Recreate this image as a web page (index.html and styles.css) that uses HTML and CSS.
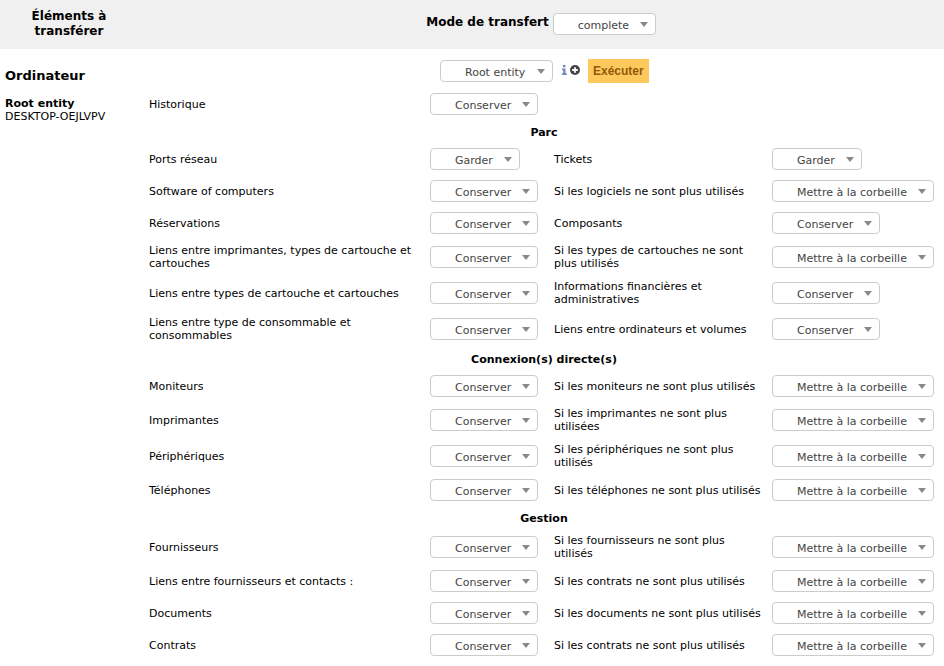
FILE: index.html
```html
<!DOCTYPE html>
<html lang="fr">
<head>
<meta charset="utf-8">
<title>Transfert</title>
<link rel="stylesheet" href="styles.css">
</head>
<body>
<form class="transfer">
  <header class="top">
    <h1 class="top-title">Éléments à transférer</h1>
    <div class="mode">
      <label for="mode">Mode de transfert</label>
      <span class="pick mode-pick"><select id="mode"><option>complete</option></select></span>
    </div>
  </header>
  <main class="body">
    <aside class="items">
      <h2 class="items-type">Ordinateur</h2>
      <p class="items-entity">Root entity</p>
      <p class="items-name">DESKTOP-OEJLVPV</p>
    </aside>
    <div class="options">
      <div class="target">
        <span class="pick entity-pick"><select aria-label="Root entity"><option>Root entity</option></select></span>
        <button type="button" class="icon-btn info" aria-label="Informations"><svg width="6" height="12" viewBox="0 0 6 12"><path d="M1 1h2.5v2.3h-2.5zM0 4.5h3.5v4.7h1.2v1.8h-4.7v-1.8h1.2v-2.9h-1.2z" fill="#7486bd"/></svg></button>
        <button type="button" class="icon-btn" aria-label="Ajouter"><svg width="10" height="10" viewBox="0 0 10 10"><circle cx="5" cy="5" r="5" fill="#444"/><path d="M4.1 2.2h1.8v1.9h1.9v1.8h-1.9v1.9h-1.8v-1.9h-1.9v-1.8h1.9z" fill="#fff"/></svg></button>
        <button type="button" class="run">Exécuter</button>
      </div>
      <div class="row"><label for="a0">Historique</label><span class="pick keep"><select id="a0"><option>Conserver</option></select></span></div>

      <h3 class="section">Parc</h3>
      <div class="row"><label for="a1">Ports réseau</label><span class="pick hold"><select id="a1"><option>Garder</option></select></span><label for="b1">Tickets</label><span class="pick hold"><select id="b1"><option>Garder</option></select></span></div>
      <div class="row"><label for="a2">Software of computers</label><span class="pick keep"><select id="a2"><option>Conserver</option></select></span><label for="b2">Si les logiciels ne sont plus utilisés</label><span class="pick trash"><select id="b2"><option>Mettre à la corbeille</option></select></span></div>
      <div class="row"><label for="a3">Réservations</label><span class="pick keep"><select id="a3"><option>Conserver</option></select></span><label for="b3">Composants</label><span class="pick keep"><select id="b3"><option>Conserver</option></select></span></div>
      <div class="row"><label for="a4">Liens entre imprimantes, types de cartouche et cartouches</label><span class="pick keep"><select id="a4"><option>Conserver</option></select></span><label for="b4">Si les types de cartouches ne sont plus utilisés</label><span class="pick trash"><select id="b4"><option>Mettre à la corbeille</option></select></span></div>
      <div class="row"><label for="a5">Liens entre types de cartouche et cartouches</label><span class="pick keep"><select id="a5"><option>Conserver</option></select></span><label for="b5">Informations financières et administratives</label><span class="pick keep"><select id="b5"><option>Conserver</option></select></span></div>
      <div class="row"><label for="a6">Liens entre type de consommable et consommables</label><span class="pick keep"><select id="a6"><option>Conserver</option></select></span><label for="b6">Liens entre ordinateurs et volumes</label><span class="pick keep"><select id="b6"><option>Conserver</option></select></span></div>

      <h3 class="section">Connexion(s) directe(s)</h3>
      <div class="row"><label for="a7">Moniteurs</label><span class="pick keep"><select id="a7"><option>Conserver</option></select></span><label for="b7">Si les moniteurs ne sont plus utilisés</label><span class="pick trash"><select id="b7"><option>Mettre à la corbeille</option></select></span></div>
      <div class="row"><label for="a8">Imprimantes</label><span class="pick keep"><select id="a8"><option>Conserver</option></select></span><label for="b8">Si les imprimantes ne sont plus utilisées</label><span class="pick trash"><select id="b8"><option>Mettre à la corbeille</option></select></span></div>
      <div class="row"><label for="a9">Périphériques</label><span class="pick keep"><select id="a9"><option>Conserver</option></select></span><label for="b9">Si les périphériques ne sont plus utilisés</label><span class="pick trash"><select id="b9"><option>Mettre à la corbeille</option></select></span></div>
      <div class="row"><label for="a10">Téléphones</label><span class="pick keep"><select id="a10"><option>Conserver</option></select></span><label for="b10">Si les téléphones ne sont plus utilisés</label><span class="pick trash"><select id="b10"><option>Mettre à la corbeille</option></select></span></div>

      <h3 class="section">Gestion</h3>
      <div class="row"><label for="a11">Fournisseurs</label><span class="pick keep"><select id="a11"><option>Conserver</option></select></span><label for="b11">Si les fournisseurs ne sont plus utilisés</label><span class="pick trash"><select id="b11"><option>Mettre à la corbeille</option></select></span></div>
      <div class="row"><label for="a12">Liens entre fournisseurs et contacts :</label><span class="pick keep"><select id="a12"><option>Conserver</option></select></span><label for="b12">Si les contrats ne sont plus utilisés</label><span class="pick trash"><select id="b12"><option>Mettre à la corbeille</option></select></span></div>
      <div class="row"><label for="a13">Documents</label><span class="pick keep"><select id="a13"><option>Conserver</option></select></span><label for="b13">Si les documents ne sont plus utilisés</label><span class="pick trash"><select id="b13"><option>Mettre à la corbeille</option></select></span></div>
      <div class="row"><label for="a14">Contrats</label><span class="pick keep"><select id="a14"><option>Conserver</option></select></span><label for="b14">Si les contrats ne sont plus utilisés</label><span class="pick trash"><select id="b14"><option>Mettre à la corbeille</option></select></span></div>
    </div>
  </main>
</form>
</body>
</html>
```
FILE: styles.css
```css
* { box-sizing: border-box; }
body {
  margin: 0;
  background: #fff;
  color: #000;
  font: 11px/13px Verdana, "DejaVu Sans", sans-serif;
}
h1, h2, h3, p { margin: 0; }

.top {
  display: grid;
  grid-template-columns: 138px 1fr;
  align-items: center;
  min-height: 49px;
  background: #f0f0f0;
  font-size: 12px;
  font-weight: bold;
}
.top-title {
  padding: 0 28px 2px;
  font-size: 12px;
  line-height: 15px;
  text-align: center;
}
.mode {
  display: flex;
  align-items: flex-start;
  justify-content: center;
  gap: 4px;
  padding-bottom: 1px;
  line-height: 18px;
}

.body {
  display: grid;
  grid-template-columns: 144px 1fr;
  padding: 6px 0 5px 5px;
}
.items-type {
  padding: 12px 0;
  font-size: 13px;
  line-height: 18px;
}
.items-entity { font-weight: bold; }

.target {
  display: flex;
  align-items: center;
  padding: 4px 0 5px 291px;
}
.icon-btn {
  display: flex;
  padding: 0 0 2px;
  border: 0;
  background: none;
}
.info { margin: 0 2px 0 9px; }
.run {
  height: 24px;
  margin-left: 8px;
  padding: 0 5px;
  border: 0;
  background: #fec95c;
  color: #8f5a0a;
  font: bold 12px "Liberation Sans", Arial, sans-serif;
}

.row {
  display: grid;
  grid-template-columns: 281fr 124fr 218fr 172fr;
  align-items: center;
  min-height: 32px;
  padding: 5px 0;
}
.row label { padding-right: 8px; }
.section {
  padding: 6px 5px 4px 0;
  font-size: 11px;
  text-align: center;
}

.pick {
  position: relative;
  display: block;
}
.pick::after {
  content: "";
  position: absolute;
  top: 9px;
  right: 8px;
  border: 4px solid transparent;
  border-top: 5px solid #888;
  border-bottom: 0;
  pointer-events: none;
}
.pick select {
  display: block;
  width: 100%;
  height: 22px;
  padding: 2px 20px 0 24px;
  border: 1px solid #ccc;
  border-radius: 4px;
  appearance: none;
  background: #fff;
  color: #444;
  font: 11px/13px Verdana, "DejaVu Sans", sans-serif;
}
.hold { width: 90px; }
.keep { width: 108px; }
.trash { width: 162px; }
.mode-pick { width: 103px; }
.entity-pick { width: 113px; }
```
